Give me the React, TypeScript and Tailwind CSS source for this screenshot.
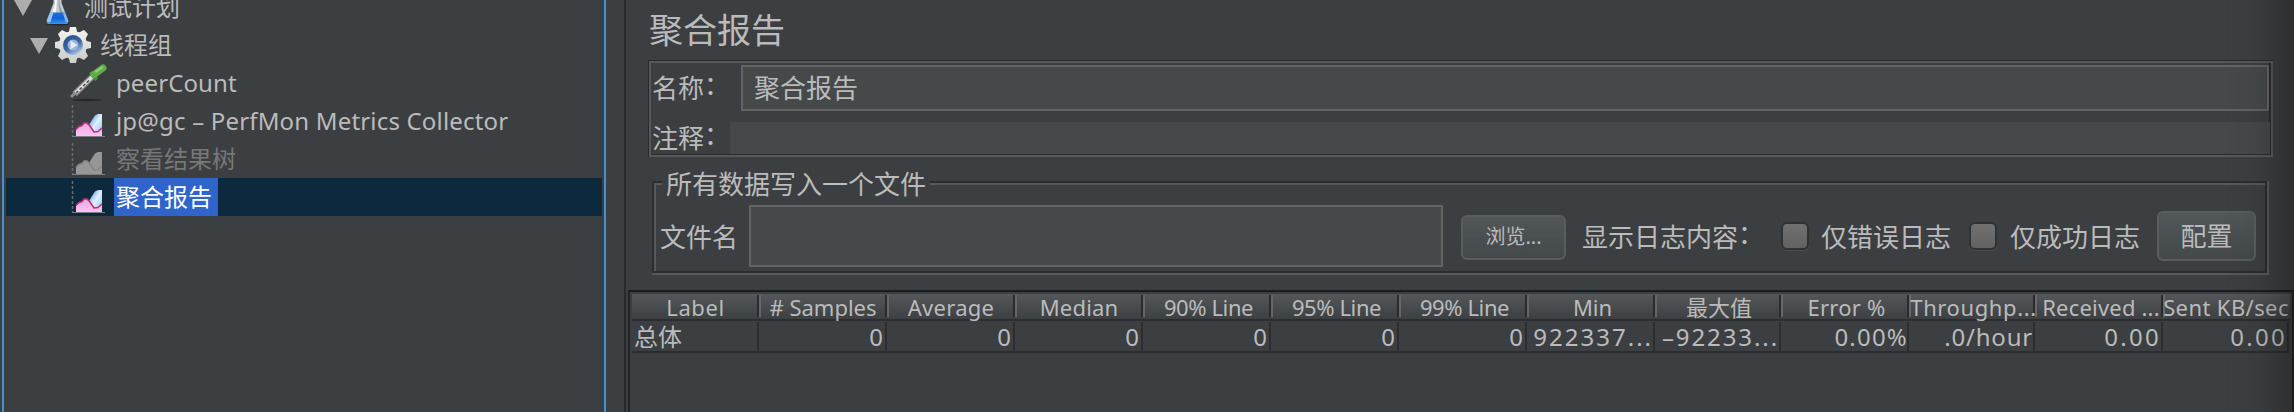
import React from "react";

function Triangle({ className }: { className: string }) {
  return (
    <svg className={className} width="18" height="16" viewBox="0 0 18 16">
      <path d="M0 0H18L9 16Z" fill="#adadad" />
    </svg>
  );
}

function FlaskIcon() {
  return (
    <svg width="24" height="38" viewBox="0 0 24 38" className="shrink-0">
      <defs>
        <linearGradient id="liquid" x1="0" y1="0" x2="0" y2="1">
          <stop offset="0" stopColor="#1f6fd0" />
          <stop offset="0.5" stopColor="#0a63d6" />
          <stop offset="1" stopColor="#3c93f2" />
        </linearGradient>
      </defs>
      <ellipse cx="12" cy="36" rx="12" ry="1.500" fill="#242627" />
      <path d="M7.500 4V15L1 32Q0 36 4 36H19Q23 36 22 32L15.500 15V4Z" fill="#c3cbd1" />
      <path d="M9 4V16L6 25H10L11.500 4Z" fill="#f6f8f9" />
      <path d="M13.500 4V16L16.500 25H14L12.500 16Z" fill="#8f989e" />
      <path d="M4 24.500H19L22 32Q23 36 19 36H4Q0 36 1 32Z" fill="url(#liquid)" />
      <path d="M4 24.500H7.500L4.500 34Q0 35 1 32Z" fill="#9cc4f0" />
      <path d="M19 24.500L22 32Q23 35 19.500 34L17 25Z" fill="#86b6ea" />
    </svg>
  );
}

function GearIcon() {
  return (
    <svg width="38" height="38" viewBox="0 0 38 38" className="shrink-0">
      <defs>
        <linearGradient id="gear" x1="0" y1="0" x2="0" y2="1">
          <stop offset="0" stopColor="#f2f2f0" />
          <stop offset="1" stopColor="#cdcdc9" />
        </linearGradient>
        <linearGradient id="disc" x1="0" y1="0" x2="0.6" y2="1">
          <stop offset="0" stopColor="#234a86" />
          <stop offset="0.6" stopColor="#3c66a2" />
          <stop offset="1" stopColor="#a9c4e6" />
        </linearGradient>
      </defs>
      <g fill="url(#gear)">
        <circle cx="19" cy="19" r="14" />
        <path d="M16 1H22L23.500 8H14.500ZM16 37H22L23.500 30H14.500ZM1 16V22L8 23.500V14.500ZM37 16V22L30 23.500V14.500Z" />
        <path d="M4 8L8 4 14 7 7 14ZM34 8L30 4 24 7 31 14ZM4 30L8 34 14 31 7 24ZM34 30L30 34 24 31 31 24Z" />
      </g>
      <circle cx="19" cy="19" r="10" fill="url(#disc)" />
      <circle cx="19" cy="19" r="5.500" fill="#9ab4d8" />
      <path d="M16.500 14.500L23.500 19 16.500 23.500Z" fill="#e4ebf5" />
    </svg>
  );
}

function DropperIcon() {
  return (
    <svg width="38" height="38" viewBox="0 0 38 38" className="shrink-0">
      <ellipse cx="17" cy="36" rx="15" ry="1.200" fill="#262829" />
      <path d="M1 33L7 27" stroke="#8f8f8f" strokeWidth="3" />
      <path d="M4.500 30L22 13" stroke="#858585" strokeWidth="6" />
      <path d="M5.500 29L22 13" stroke="#dcdcdc" strokeWidth="3.600" />
      <path d="M6 29L20 15.500" stroke="#4b4d4e" strokeWidth="1.500" strokeDasharray="3 2" />
      <path d="M19 9L22 7 28 13 27 16 25 17Z" fill="#3c8f31" />
      <path d="M24 10.500L33 4" stroke="#62ad48" strokeWidth="7" strokeLinecap="round" />
      <path d="M26 7.500L32 3.500" stroke="#8dcc74" strokeWidth="2.500" strokeLinecap="round" />
    </svg>
  );
}

function ChartIcon({ gray = false }: { gray?: boolean }) {
  return (
    <svg width="38" height="38" viewBox="0 0 38 38" className="shrink-0">
      <defs>
        <linearGradient id="sky" x1="0" y1="0" x2="1" y2="1">
          <stop offset="0.2" stopColor="#7fb3f2" />
          <stop offset="0.5" stopColor="#e2f0ff" />
          <stop offset="0.9" stopColor="#9cc6f6" />
        </linearGradient>
        <linearGradient id="rose" x1="0" y1="0" x2="0" y2="1">
          <stop offset="0" stopColor="#e8a8d8" />
          <stop offset="1" stopColor="#f9c4f8" />
        </linearGradient>
      </defs>
      <path d="M2.500 3V34" stroke="#686b6d" strokeWidth="1.500" strokeDasharray="3 2" />
      <path d="M2 34.500H35" stroke="#7c7f80" strokeWidth="1.200" />
      <path d="M19 33V23L22 18 25 13.500 28 12 32 12V33Z" fill={gray ? "#979797" : "url(#sky)"} />
      <path d="M6 34V27L9 24.500 12 23.500 14 21 17 21 20 24 24 30 28 29.500 32 26V34Z" fill={gray ? "#979797" : "url(#rose)"} />
      <path
        d="M6 27.500L9 24.500 12 23.500 14 21 17 21 20 24 24 30 28 29.500 32 26"
        fill="none"
        stroke={gray ? "#858585" : "#c52a78"}
        strokeWidth="1.600"
      />
    </svg>
  );
}

function Colon() {
  return <span className="align-[3px] leading-none">：</span>;
}

function CheckBox() {
  return (
    <span className="h-[28px] w-[28px] shrink-0 rounded-[6px] border-2 border-[#2f3133] bg-linear-to-b from-[#707070] to-[#626262] shadow-[0_1px_0_#4b4e50]" />
  );
}

const columns = [
  { title: "Label", value: "总体", width: "w-[127px]", head: "tracking-[0.6px]", cell: "" },
  { title: "# Samples", value: "0", width: "w-[128px]", head: "", cell: "mr-[2px]" },
  { title: "Average", value: "0", width: "w-[128px]", head: "tracking-[0.3px]", cell: "mr-[2px]" },
  { title: "Median", value: "0", width: "w-[128px]", head: "tracking-[0.2px]", cell: "mr-[2px]" },
  { title: "90% Line", value: "0", width: "w-[128px]", head: "tracking-[-0.4px] ml-[3px]", cell: "mr-[2px]" },
  { title: "95% Line", value: "0", width: "w-[128px]", head: "tracking-[-0.4px] ml-[3px]", cell: "mr-[2px]" },
  { title: "99% Line", value: "0", width: "w-[128px]", head: "tracking-[-0.4px] ml-[3px]", cell: "mr-[2px]" },
  { title: "Min", value: "922337...", width: "w-[128px]", head: "ml-[3px]", cell: "tracking-[2px]" },
  { title: "最大值", value: "–92233...", width: "w-[126px]", head: "ml-[2px]", cell: "tracking-[1.9px]" },
  { title: "Error %", value: "0.00%", width: "w-[128px]", head: "tracking-[0.2px] ml-[3px]", cell: "tracking-[1.2px] -mr-[1px]" },
  { title: "Throughp...", value: ".0/hour", width: "w-[126px]", head: "tracking-[0.6px] ml-[3px]", cell: "tracking-[0.8px]" },
  { title: "Received ...", value: "0.00", width: "w-[128px]", head: "tracking-[0.2px] ml-[4px]", cell: "tracking-[2.300px]" },
  { title: "Sent KB/sec", value: "0.00", width: "w-[126px]", head: "tracking-[0.4px]", cell: "tracking-[2.300px]" },
];

export default function App() {
  return (
    <div className="relative flex h-[412px] w-[2294px] overflow-hidden bg-[#3c3f41] font-['Noto_Sans','Noto_Sans_CJK_SC',sans-serif] text-[26px] whitespace-nowrap text-[#bbbbbb]">
      <div className="ml-[2px] flex w-[604px] shrink-0 flex-col border-x-2 border-[#4590cf] px-[2px] text-[24px]">
        <div className="-mt-[12px] flex h-[38px] shrink-0 items-center pl-[8px]">
          <Triangle className="mt-[2px] mr-[14px]" />
          <FlaskIcon />
          <span className="ml-[14px]">测试计划</span>
        </div>
        <div className="flex h-[38px] items-center pl-[24px]">
          <Triangle className="mt-[2px] mr-[6px]" />
          <GearIcon />
          <span className="ml-[8px]">线程组</span>
        </div>
        <div className="flex h-[38px] items-center pl-[64px]">
          <DropperIcon />
          <span className="ml-[8px] tracking-[0.1px]">peerCount</span>
        </div>
        <div className="flex h-[38px] items-center pl-[64px]">
          <ChartIcon />
          <span className="ml-[8px] tracking-[0.18px]">jp@gc – PerfMon Metrics Collector</span>
        </div>
        <div className="flex h-[38px] items-center pl-[64px] text-[#777777]">
          <ChartIcon gray />
          <span className="ml-[8px]">察看结果树</span>
        </div>
        <div className="flex h-[38px] items-center bg-[#0d293e] pl-[64px]">
          <ChartIcon />
          <span className="ml-[6px] h-[38px] w-[104px] bg-[#2f65ca] pl-[2px] leading-[38px] text-white">聚合报告</span>
        </div>
      </div>

      <div className="ml-[18px] flex w-[1670px] shrink-0 flex-col border-l-2 border-[#282a2c]">
        <h1 className="mt-[6px] ml-[23px] h-[54px] text-[34px] leading-[48px]">聚合报告</h1>

        <div className="ml-[22px] h-[97px] w-[1625px] border-t border-l border-[#292b2d]">
          <div className="flex h-[96px] flex-col border-2 border-[#55595b]">
            <div className="flex h-[59px] w-[1620px] border-r-2 border-[#292b2d] pt-[2px]">
              <span className="w-[90px] pl-[1px] leading-[46px]">
                名称
                <Colon />
              </span>
              <div className="flex h-[46px] w-[1528px] items-center border-2 border-[#646464] bg-[#45494a] pl-[11px]">聚合报告</div>
            </div>
            <div className="flex h-[33px] w-[1620px] items-center border-r border-b border-[#292b2d]">
              <span className="w-[79px] pl-[1px]">
                注释
                <Colon />
              </span>
              <div className="h-[32px] w-[1540px] bg-[#45494a]" />
            </div>
          </div>
        </div>

        <fieldset className="relative mt-[24px] ml-[26px] h-[94px] w-[1617px] border-2 border-[#55595b]">
          <div className="absolute -top-[2px] -left-[2px] h-[92px] w-[1615px] border-2 border-[#2b2d2f]" />
          <div className="absolute top-0 left-0 h-[88px] w-[1611px] border-t-2 border-l-2 border-[#55595b]" />
          <div className="relative -mt-[14px] ml-[8px] h-[30px] w-[268px] bg-[#3c3f41] pl-[4px] leading-[31px]">所有数据写入一个文件</div>
          <div className="relative mt-[6px] flex h-[62px] items-center">
            <span className="w-[95px] pt-[2px] pl-[6px]">文件名</span>
            <div className="h-[62px] w-[694px] border-2 border-[#646464] bg-[#45494a]" />
            <button className="mt-[2px] ml-[18px] h-[45px] w-[105px] rounded-[6px] border-2 border-[#595d5e] bg-linear-to-b from-[#515658] to-[#434849] text-[20px]">
              浏览...
            </button>
            <span className="ml-[16px] w-[199px] pt-[2px]">
              显示日志内容
              <Colon />
            </span>
            <CheckBox />
            <span className="ml-[12px] w-[148px] pt-[2px]">仅错误日志</span>
            <CheckBox />
            <span className="ml-[13px] w-[147px] pt-[2px]">仅成功日志</span>
            <button className="h-[50px] w-[99px] rounded-[6px] border-2 border-[#595d5e] bg-linear-to-b from-[#515658] to-[#434849] pt-[1px]">
              配置
            </button>
          </div>
        </fieldset>

        <div className="mt-[15px] ml-[2px] flex h-[122px] w-[1666px] shrink-0 flex-col border-2 border-b-0 border-[#222425] border-t-[#1b1c1d] pt-[2px] pr-[2px] pl-[2px]">
          <div className="flex h-[27px] border-b-2 border-[#2b2d2e] bg-linear-to-b from-[#54585a] to-[#3d4042] text-[22px]">
            {columns.map((c, i) => (
              <div
                key={c.title}
                className={`mt-px flex h-[22px] shrink-0 items-center justify-center border-x-2 pt-[3px] ${c.width} ${i === 0 ? "border-l-transparent" : "border-l-[#65686a]"} ${i === 12 ? "border-r-transparent" : "border-r-[#282a2c]"}`}
              >
                <span className={c.head}>{c.title}</span>
              </div>
            ))}
          </div>
          <div className="flex h-[32px] w-[1657px] border-b-2 border-[#2b2d2e] text-[24px]">
            {columns.map((c, i) => (
              <div
                key={c.title}
                className={`mt-px flex shrink-0 items-center border-r-2 border-[#2b2d2e] ${c.width} ${i === 0 ? "pl-[2px]" : "justify-end"}`}
              >
                <span className={c.cell}>{c.value}</span>
              </div>
            ))}
          </div>
        </div>
      </div>

      <div className="pointer-events-none absolute top-0 right-0 h-full w-[74px] bg-linear-to-r from-transparent via-black/5 to-black/25" />
    </div>
  );
}
